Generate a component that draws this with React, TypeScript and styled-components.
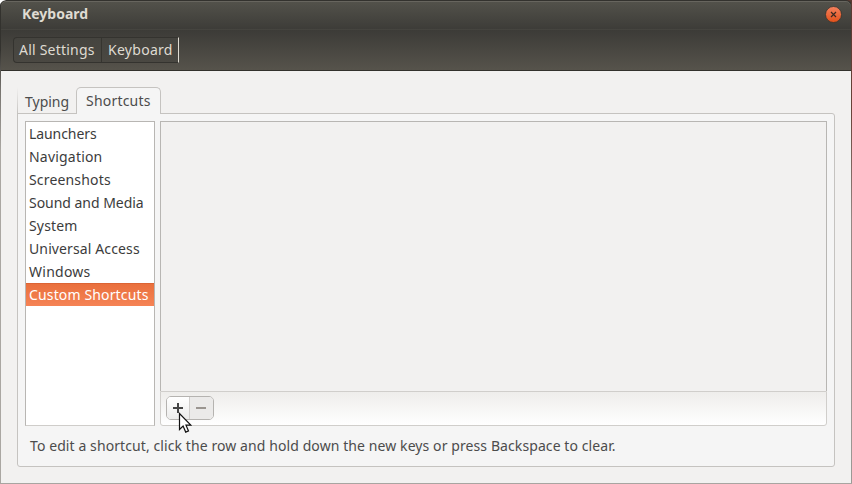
import React from "react";
import styled, { createGlobalStyle } from "styled-components";

const Global = createGlobalStyle`
  *, *::before, *::after { box-sizing: border-box; }
  html, body { margin: 0; background: #fff; overflow: hidden; }
  button { font: inherit; padding: 0; margin: 0; }
`;

const Window = styled.div`
  position: relative;
  width: 852px;
  height: 484px;
  display: flex;
  flex-direction: column;
  overflow: hidden;
  background: #f2f1f0;
  border-radius: 6px 0 0 0;
  color: #4c4c4c;
  font: 14px/20px "Noto Sans", sans-serif;
`;

const Frame = styled.div`
  position: absolute;
  inset: 0;
  border-bottom: 1px solid #a8a5a1;
  pointer-events: none;
  background:
    linear-gradient(#33322e 50px, #77746f 90px, #aaa7a2 150px) 0 0 / 1px 100% no-repeat,
    linear-gradient(#5a3a31 8px, #684238 110px, #948783 220px, #9c9995 100%) 100% 0 / 1px 100% no-repeat;
`;

const Label = styled.span<{ $spacing?: number }>`
  white-space: nowrap;
  letter-spacing: ${(p) => p.$spacing ?? 0}px;
`;

const TitleCap = styled.div`
  flex: none;
  background: linear-gradient(90deg, #fff 50%, #5a3a31 50%);
`;

const TitleBar = styled.header`
  height: 29px;
  display: flex;
  align-items: center;
  justify-content: space-between;
  padding: 0 9px 2px 21px;
  background: linear-gradient(#53524b, #3d3c38);
  border: 1px solid #33322e;
  border-bottom: 0;
  border-radius: 6px 6px 0 0;
  box-shadow: inset 0 1px #67655e;
  color: #dfdbd2;
  font-weight: 700;
`;

const CloseButton = styled.button`
  width: 17px;
  height: 17px;
  border: 0;
  background: none;
  line-height: 0;
`;

const Toolbar = styled.nav`
  flex: none;
  height: 42px;
  display: flex;
  align-items: flex-start;
  padding: 7px 0 0 13px;
  background: linear-gradient(#3c3b37, #56534b);
  border-top: 1px solid #45443f;
  border-bottom: 1px solid #33322d;
`;

const Crumbs = styled.div`
  display: flex;
  width: 166px;
  height: 26px;
  border: 1px solid #34332f;
  border-right-color: #dfdbd2;
  border-radius: 4px 0 0 4px;
  background: linear-gradient(#45443f, #4a4842);
  color: #dfdbd2;
`;

const Crumb = styled.button<{ $width: number }>`
  width: ${(p) => p.$width}px;
  padding-left: ${(p) => (p.$width > 80 ? 5 : 6)}px;
  border: 0;
  border-right: ${(p) => (p.$width > 80 ? "1px solid #363530" : "0")};
  background: none;
  color: inherit;
  text-align: left;
`;

const Content = styled.main`
  flex: 1;
  display: flex;
  flex-direction: column;
  padding: 16px 17px 17px;
`;

const Tabs = styled.div`
  display: flex;
  align-items: flex-end;
  height: 27px;
  margin-bottom: -1px;
  z-index: 1;
  background: linear-gradient(#c5c3c000, #c5c3c0) 0 0 / 1px 100% no-repeat;
`;

const Tab = styled.button<{ $active?: boolean }>`
  width: ${(p) => (p.$active ? 85 : 59)}px;
  height: ${(p) => (p.$active ? 27 : 25)}px;
  padding: ${(p) => (p.$active ? "0 0 1px 9px" : "0 0 0 7px")};
  border: 1px solid ${(p) => (p.$active ? "#c5c3c0" : "transparent")};
  border-bottom: 0;
  border-radius: 5px 5px 0 0;
  background: ${(p) => (p.$active ? "#f5f5f5" : "transparent")};
  color: #4c4c4c;
  text-align: left;
`;

const Panel = styled.section`
  flex: 1;
  display: flex;
  flex-direction: column;
  padding: 7px;
  border: 1px solid #c5c3c0;
  border-radius: 0 3px 3px 3px;
  background: #f5f5f5;
`;

const Columns = styled.div`
  display: flex;
  gap: 5px;
  height: 305px;
`;

const List = styled.ul`
  width: 130px;
  margin: 0;
  padding: 0;
  list-style: none;
  border: 1px solid #b8b6b3;
  border-bottom-color: #cfcdca;
  background: #fff;
`;

const Item = styled.li<{ $selected?: boolean }>`
  height: 23px;
  padding-left: 3px;
  line-height: 23px;
  color: ${(p) => (p.$selected ? "#fff" : "#3c3c3c")};
  background: ${(p) => (p.$selected ? "linear-gradient(#e96f3c, #f58355)" : "none")};
  box-shadow: ${(p) => (p.$selected ? "inset 0 1px #dc6434" : "none")};
`;

const Detail = styled.div`
  flex: none;
  width: 667px;
  display: flex;
  flex-direction: column;
`;

const Empty = styled.div`
  height: 270px;
  border: 1px solid #b8b6b3;
  border-bottom: 0;
  background: #f2f1f0;
`;

const ActionBar = styled.div`
  height: 35px;
  padding: 4px 5px;
  display: flex;
  border: 1px solid #d0cecb;
  border-radius: 0 0 3px 3px;
  background: linear-gradient(#eeedeb, #fff);
`;

const ActionGroup = styled.div`
  display: flex;
  width: 48px;
  height: 24px;
  border: 1px solid #b5b3b0;
  border-radius: 5px;
  overflow: hidden;
`;

const Action = styled.button`
  width: 22px;
  height: 22px;
  border: 0;
  line-height: 0;
  background: linear-gradient(#fff, #ececeb);
  &:disabled {
    width: 24px;
    border-left: 1px solid #cfcdcb;
    background: #ebeae9;
  }
`;

const Hint = styled.p`
  margin: 10px 0 0 5px;
`;

const Pointer = styled.svg`
  position: absolute;
  left: 178px;
  top: 412px;
`;

const items: [string, number][] = [
  ["Launchers", -0.08],
  ["Navigation", 0.2],
  ["Screenshots", 0.17],
  ["Sound and Media", -0.03],
  ["System", 0.15],
  ["Universal Access", 0.12],
  ["Windows", 0.25],
  ["Custom Shortcuts", 0.14],
];

export default function App() {
  return (
    <>
      <Global />
      <Window>
        <TitleCap>
          <TitleBar>
            <Label>Keyboard</Label>
            <CloseButton aria-label="Close">
              <svg width="17" height="17" viewBox="0 0 17 17">
                <defs>
                  <linearGradient id="close" x2="0" y2="1">
                    <stop stopColor="#f5825f" />
                    <stop offset="1" stopColor="#e25019" />
                  </linearGradient>
                </defs>
                <circle cx="8.5" cy="8.5" r="8" fill="url(#close)" stroke="#34332f" strokeWidth=".8" />
                <path d="M6 6l5 5M11 6l-5 5" stroke="#3c2a22" strokeWidth="1.2" />
              </svg>
            </CloseButton>
          </TitleBar>
        </TitleCap>
        <Toolbar>
          <Crumbs>
            <Crumb $width={88}><Label $spacing={0.22}>All Settings</Label></Crumb>
            <Crumb $width={76}><Label $spacing={0.28}>Keyboard</Label></Crumb>
          </Crumbs>
        </Toolbar>
        <Content>
          <Tabs>
            <Tab><Label>Typing</Label></Tab>
            <Tab $active><Label $spacing={0.2}>Shortcuts</Label></Tab>
          </Tabs>
          <Panel>
            <Columns>
              <List>
                {items.map(([name, spacing]) => (
                  <Item key={name} $selected={name === "Custom Shortcuts"}>
                    <Label $spacing={spacing}>{name}</Label>
                  </Item>
                ))}
              </List>
              <Detail>
                <Empty />
                <ActionBar>
                  <ActionGroup>
                    <Action aria-label="Add">
                      <svg width="12" height="12"><path d="M6 1v10M1 6h10" stroke="#444" strokeWidth="2" /></svg>
                    </Action>
                    <Action aria-label="Remove" disabled>
                      <svg width="11" height="12"><path d="M0 6h10" stroke="#9a9590" strokeWidth="2" /></svg>
                    </Action>
                  </ActionGroup>
                </ActionBar>
              </Detail>
            </Columns>
            <Hint>
              <Label $spacing={0.09}>To edit a shortcut, click the row and hold down the new keys or press Backspace to clear.</Label>
            </Hint>
          </Panel>
        </Content>
        <Frame />
        <Pointer width="14" height="22" viewBox="0 0 14 22">
          <path d="M1.5 1.5v16l3.6-3.4 2.6 6 2.8-1.2-2.5-5.7h4.8z" fill="#fff" stroke="#111" strokeWidth="1.2" />
        </Pointer>
      </Window>
    </>
  );
}
